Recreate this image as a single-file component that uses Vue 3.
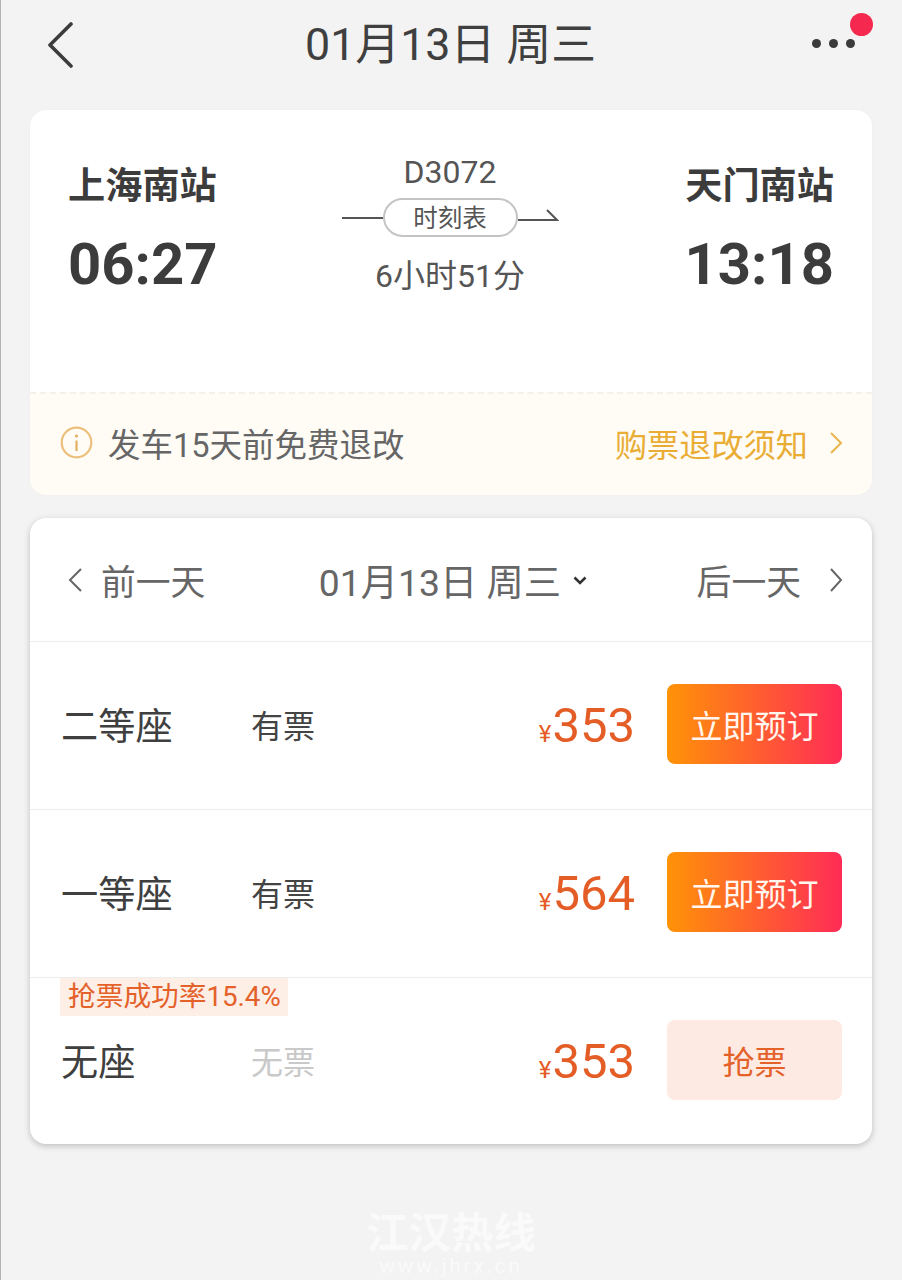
<script setup>
const rows = [
  { name: '二等座', status: '有票', price: 353, action: '立即预订' },
  { name: '一等座', status: '有票', price: 564, action: '立即预订' },
  { name: '无座', status: '无票', price: 353, action: '抢票', soldOut: true, rate: '抢票成功率15.4%' }
]
</script>

<template>
  <div class="page">
    <header class="topbar">
      <svg class="back" width="30" height="46" viewBox="0 0 30 46"><path d="M25 2 L4 23 L25 44" fill="none" stroke="#3c3c3c" stroke-width="3.6" stroke-linecap="round" stroke-linejoin="round"/></svg>
      <div class="title">01月13日 周三</div>
      <div class="more">
        <i></i><i></i><i></i>
        <span class="dot"></span>
      </div>
    </header>

    <section class="card trip">
      <div class="route">
        <div class="stop">
          <div class="station">上海南站</div>
          <div class="time">06:27</div>
        </div>
        <div class="train">
          <div class="code">D3072</div>
          <div class="line">
            <span class="rule"></span>
            <span class="pill">时刻表</span>
            <svg width="41" height="14" viewBox="0 0 41 14"><path d="M0 12 H39 L29 2" fill="none" stroke="#555" stroke-width="2"/></svg>
          </div>
          <div class="dur">6小时51分</div>
        </div>
        <div class="stop end">
          <div class="station">天门南站</div>
          <div class="time">13:18</div>
        </div>
      </div>
      <div class="notice">
        <svg width="33" height="33" viewBox="0 0 33 33"><circle cx="16.5" cy="16.5" r="14.8" fill="none" stroke="#ecc07c" stroke-width="2.2"/><circle cx="16.5" cy="10" r="1.6" fill="#e3ae62"/><path d="M16.5 14.5 V25" stroke="#e3ae62" stroke-width="2.2"/></svg>
        <span class="notice-text">发车15天前免费退改</span>
        <span class="notice-link">购票退改须知</span>
        <svg width="14" height="24" viewBox="0 0 14 24"><path d="M2 2 L12 12 L2 22" fill="none" stroke="#e9b44c" stroke-width="2"/></svg>
      </div>
    </section>

    <section class="card seats">
      <div class="dates">
        <div class="day">
          <svg width="16" height="26" viewBox="0 0 16 26"><path d="M14 2 L3 13 L14 24" fill="none" stroke="#666" stroke-width="2"/></svg>
          <span>前一天</span>
        </div>
        <div class="current">
          <span>01月13日 周三</span>
          <svg width="14" height="9" viewBox="0 0 14 9"><path d="M1.5 1.5 L7 7 L12.5 1.5" fill="none" stroke="#333" stroke-width="2.6"/></svg>
        </div>
        <div class="day">
          <span>后一天</span>
          <svg width="14" height="26" viewBox="0 0 14 26"><path d="M2 2 L12 13 L2 24" fill="none" stroke="#666" stroke-width="2"/></svg>
        </div>
      </div>
      <div v-for="row in rows" :key="row.name" class="row">
        <span v-if="row.rate" class="rate">{{ row.rate }}</span>
        <span class="seat">{{ row.name }}</span>
        <span class="status" :class="{ none: row.soldOut }">{{ row.status }}</span>
        <span class="price"><small>¥</small>{{ row.price }}</span>
        <button class="book" :class="{ grab: row.soldOut }">{{ row.action }}</button>
      </div>
    </section>

    <div class="mark">
      <div class="mark-cn">江汉热线</div>
      <div class="mark-en">www.jhrx.cn</div>
    </div>
  </div>
</template>

<style>
html, body { margin: 0; background: #f3f3f3; }
</style>

<style scoped>
.page {
  box-sizing: border-box;
  width: 902px;
  height: 1280px;
  padding: 0 30px 0 29px;
  border-left: 1px solid #b4b4b4;
  background: #f3f3f3;
  font-family: Roboto, "Noto Sans CJK SC", sans-serif;
  color: #444;
  overflow: hidden;
}
.topbar {
  height: 110px;
  display: grid;
  grid-template-columns: 1fr auto 1fr;
  align-items: center;
}
.back { margin: -21px 0 0 16px; }
.title {
  font-size: 44.8px;
  line-height: 50px;
  color: #3f3f3f;
  margin: -20px 0 0 -1px;
}
.more {
  position: relative;
  justify-self: end;
  display: flex;
  gap: 8px;
  margin: -24px 17px 0 0;
}
.more i {
  width: 9px;
  height: 9px;
  border-radius: 50%;
  background: #3a3a3a;
}
.dot {
  position: absolute;
  right: -18px;
  top: -26px;
  width: 23px;
  height: 23px;
  border-radius: 50%;
  background: #f5294f;
}
.card {
  border-radius: 16px;
  background: #fff;
  overflow: hidden;
}
.trip { height: 385px; box-shadow: 0 0 3px rgba(0, 0, 0, 0.03); }
.route {
  height: 282px;
  box-sizing: border-box;
  padding: 48px 38px 0;
  display: flex;
  justify-content: space-between;
}
.stop { width: 150px; }
.stop.end { text-align: right; }
.station {
  font-size: 37.2px;
  font-weight: 700;
  line-height: 56px;
  color: #3c3c3c;
}
.time {
  margin-top: 16px;
  font-size: 58px;
  font-weight: 700;
  line-height: 68px;
  color: #3c3c3c;
}
.train {
  display: flex;
  flex-direction: column;
  align-items: center;
  margin: -6px 0 0 -2px;
}
.code {
  font-size: 32px;
  line-height: 40px;
  color: #555;
}
.line {
  display: flex;
  align-items: center;
  margin-top: 6px;
}
.line svg { margin: -5px 0 0 0; }
.rule {
  width: 41px;
  height: 2px;
  background: #555;
}
.pill {
  box-sizing: border-box;
  width: 135px;
  height: 39px;
  border: 2px solid #c4c4c4;
  border-radius: 20px;
  text-align: center;
  font-size: 24.5px;
  line-height: 37px;
  color: #555;
  background: #fff;
}
.dur {
  margin-top: 19px;
  font-size: 32px;
  line-height: 40px;
  color: #555;
}
.notice {
  height: 103px;
  box-sizing: border-box;
  display: flex;
  align-items: center;
  padding: 0 29px 4px 30px;
  background: #fffcf6;
  border-top: 2px dashed #f4f1ea;
}
.notice-text {
  margin-left: 15px;
  flex: 1;
  font-size: 32.5px;
  color: #666;
}
.notice-link {
  font-size: 32.2px;
  color: #e9ad35;
  margin-right: 21px;
}
.seats {
  margin-top: 23px;
  height: 626px;
  box-shadow: 0 2px 6px rgba(0, 0, 0, 0.22);
}
.dates {
  height: 124px;
  box-sizing: border-box;
  padding: 0 29px 0 37px;
  display: flex;
  align-items: center;
  justify-content: space-between;
  border-bottom: 1px solid #ececec;
  color: #666;
}
.day {
  display: flex;
  align-items: center;
  font-size: 34.8px;
}
.day:first-child span { margin-left: 18px; }
.day:last-child span { margin-right: 28px; }
.current {
  display: flex;
  align-items: center;
  margin-left: 4px;
  font-size: 37.3px;
}
.current svg { margin: 2px 0 0 12px; }
.row {
  position: relative;
  box-sizing: border-box;
  height: 168px;
  display: flex;
  align-items: center;
  padding: 0 30px 3px 31px;
  border-bottom: 1px solid #ececec;
}
.row:last-child {
  border-bottom: 0;
  height: 165px;
  padding-bottom: 1px;
}
.rate {
  position: absolute;
  left: 30px;
  top: 0;
  height: 38px;
  padding: 0 7px 0 8px;
  background: #fdeee6;
  font-size: 27.7px;
  line-height: 38px;
  color: #e4622a;
  white-space: nowrap;
}
.seat {
  width: 190px;
  font-size: 37.2px;
  color: #3f3f3f;
}
.status {
  flex: 1;
  font-size: 32px;
  color: #444;
}
.status.none { color: #c9c9c9; }
.price {
  margin-top: 12px;
  font-size: 49px;
  color: #e45d27;
  line-height: 60px;
}
.price small { font-size: 24px; margin-right: 1px; }
.book {
  box-sizing: border-box;
  width: 175px;
  height: 80px;
  margin-left: 32px;
  padding: 0 0 1px;
  border: 0;
  border-radius: 8px;
  background: linear-gradient(90deg, #ff9307, #ff2c56);
  color: #fff6ee;
  font: inherit;
  font-size: 32px;
}
.book.grab {
  background: #fdeae2;
  color: #e4622a;
}
.mark {
  position: absolute;
  left: 0;
  right: 0;
  top: 1211px;
  text-align: center;
  color: #fafafa;
  font-weight: 700;
}
.mark-cn { font-size: 42.5px; line-height: 46px; }
.mark-en {
  font-size: 21px;
  line-height: 18px;
  letter-spacing: 2.7px;
  font-weight: 400;
}
</style>
